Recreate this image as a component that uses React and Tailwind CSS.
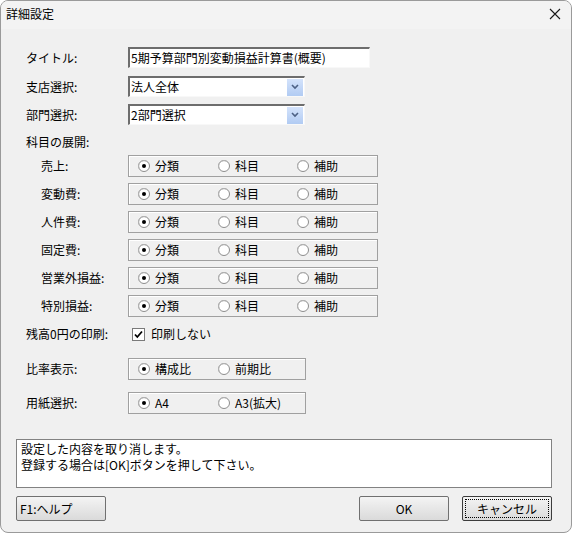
import React from 'react';

const font = { fontFamily: '"Noto Sans CJK JP", "Noto Sans", sans-serif' };

function Radio({ checked, label, className = '' }) {
    return (
        <div className={`flex items-center gap-[5px] ${className}`}>
            <svg width="12" height="12" viewBox="0 0 12 12">
                <circle cx="6" cy="6" r="5.5" fill="#ffffff" stroke="#8c8c8c" />
                <path d="M2.2 9.8 A5 5 0 0 1 9.8 2.2" fill="none" stroke="#b9b9b9" strokeWidth="1" />
                {checked && <circle cx="6" cy="6" r="2" fill="#000000" />}
            </svg>
            <span>{label}</span>
        </div>
    );
}

function Group({ children, width = 'w-[250px]' }) {
    return (
        <div className={`${width} h-[22px] border border-[#a0a0a0] shadow-[inset_1px_1px_0_#ffffff] flex items-center pl-[9px]`}>
            {children}
        </div>
    );
}

function Select({ value }) {
    return (
        <div className="w-[177px] h-[21px] bg-white border-t-2 border-l-2 border-t-[#6d6d6d] border-l-[#6d6d6d] border-r border-b border-r-[#f8f8f8] border-b-[#f8f8f8] flex items-center">
            <span className="flex-1 pl-[1px] leading-none">{value}</span>
            <div className="w-[16px] h-[17px] mr-[1px] bg-gradient-to-b from-[#d4e3fb] to-[#b1cbf3] flex items-center justify-center">
                <svg width="8" height="6" viewBox="0 0 8 6">
                    <path d="M1 1 L4 4 L7 1" fill="none" stroke="#4d6185" strokeWidth="1.6" />
                </svg>
            </div>
        </div>
    );
}

function Button({ children, focused, className = '' }) {
    return (
        <div className={`w-[90px] h-[25px] rounded-[2px] border ${focused ? 'border-[#3c3c3c]' : 'border-[#707070]'} bg-gradient-to-b from-[#f4f4f4] to-[#dadada] p-[2px] ${className}`}>
            <div className={`w-full h-full flex items-center ${focused ? 'border border-dotted border-black justify-center' : ''}`}>
                {children}
            </div>
        </div>
    );
}

const rows = ['売上:', '変動費:', '人件費:', '固定費:', '営業外損益:', '特別損益:'];

export default function App() {
    return (
        <div className="w-[572px] h-[533px] bg-white" style={font}>
            <div className="w-[572px] h-[533px] bg-[#f0f0f0] border border-[#9a9a9a] rounded-[8px] overflow-hidden text-[12px] text-black flex flex-col">
                <div className="h-[28px] bg-[#f3f3f3] flex items-center justify-between pl-[5px] pr-[10px]">
                    <span className="text-[12px] -mt-[2px]">詳細設定</span>
                    <svg width="12" height="12" viewBox="0 0 12 12" className="-mt-[2px]">
                        <path d="M1 1 L11 11 M11 1 L1 11" stroke="#1a1a1a" strokeWidth="1.1" />
                    </svg>
                </div>

                <div className="pl-[25px] flex flex-col">
                    <div className="flex items-center mt-[18px] h-[21px]">
                        <span className="w-[102px]">タイトル:</span>
                        <div className="w-[242px] h-[21px] bg-white border-t-2 border-l-2 border-t-[#6d6d6d] border-l-[#6d6d6d] border-r border-b border-r-[#f8f8f8] border-b-[#f8f8f8] flex items-center pl-[1px]">
                            5期予算部門別変動損益計算書(概要)
                        </div>
                    </div>
                    <div className="flex items-center mt-[8px]">
                        <span className="w-[102px]">支店選択:</span>
                        <Select value="法人全体" />
                    </div>
                    <div className="flex items-center mt-[7px]">
                        <span className="w-[102px]">部門選択:</span>
                        <Select value="2部門選択" />
                    </div>
                    <div className="mt-[8px] h-[18px] flex items-center">科目の展開:</div>
                    <div className="flex flex-col gap-[6px] mt-[4px]">
                        {rows.map((r) => (
                            <div key={r} className="flex items-center">
                                <span className="w-[102px] pl-[15px]">{r}</span>
                                <Group>
                                    <Radio checked label="分類" className="w-[80px]" />
                                    <Radio label="科目" className="w-[79px]" />
                                    <Radio label="補助" />
                                </Group>
                            </div>
                        ))}
                    </div>
                    <div className="flex items-center mt-[9px] h-[16px]">
                        <span className="w-[106px]">残高0円の印刷:</span>
                        <svg width="13" height="13" viewBox="0 0 13 13">
                            <rect x="0.5" y="0.5" width="12" height="12" fill="#ffffff" stroke="#7a7a7a" />
                            <path d="M3 6.5 L5.3 9 L10 3.5" fill="none" stroke="#000000" strokeWidth="1.8" />
                        </svg>
                        <span className="ml-[6px]">印刷しない</span>
                    </div>
                    <div className="flex items-center mt-[16px]">
                        <span className="w-[102px]">比率表示:</span>
                        <Group width="w-[178px]">
                            <Radio checked label="構成比" className="w-[80px]" />
                            <Radio label="前期比" />
                        </Group>
                    </div>
                    <div className="flex items-center mt-[12px]">
                        <span className="w-[102px]">用紙選択:</span>
                        <Group width="w-[178px]">
                            <Radio checked label="A4" className="w-[80px]" />
                            <Radio label="A3(拡大)" />
                        </Group>
                    </div>
                </div>

                <div className="ml-[15px] mr-[19px] mt-[25px] h-[49px] bg-white border border-[#828282] px-[4px] pt-[1px]">
                    <div className="leading-[16px]">設定した内容を取り消します。</div>
                    <div className="leading-[16px]">登録する場合は[OK]ボタンを押して下さい。</div>
                </div>

                <div className="flex items-center ml-[15px] mr-[19px] mt-[8px]">
                    <Button>
                        <span className="pl-[1px]">F1:ヘルプ</span>
                    </Button>
                    <div className="flex-1" />
                    <Button>
                        <span className="w-full text-center">OK</span>
                    </Button>
                    <Button focused className="ml-[13px]">
                        <span>キャンセル</span>
                    </Button>
                </div>
            </div>
        </div>
    );
}
